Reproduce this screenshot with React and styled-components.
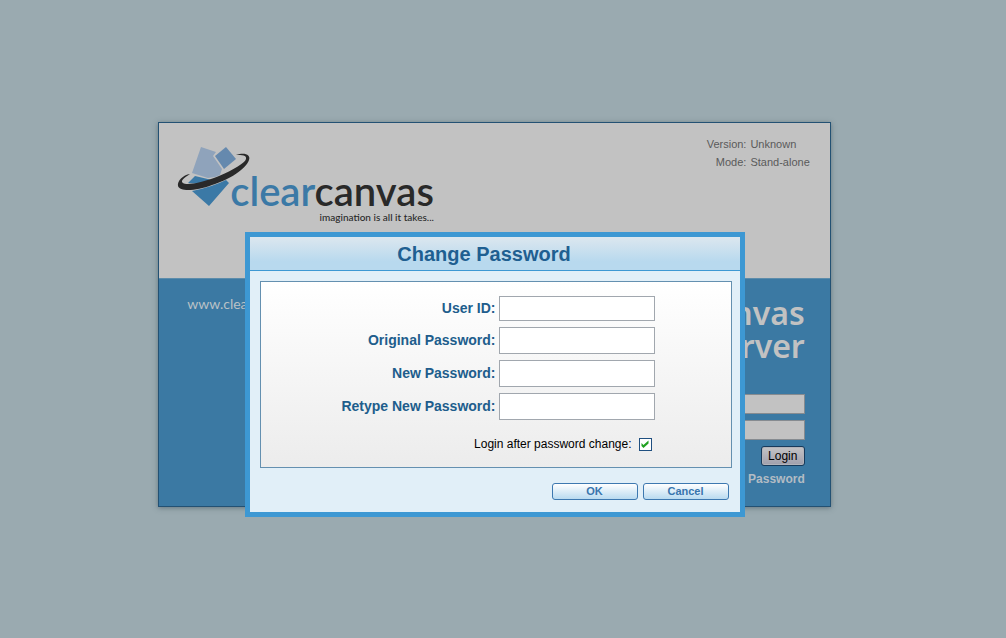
import React from 'react';
import styled, { createGlobalStyle } from 'styled-components';

const Global = createGlobalStyle`
  *, *::before, *::after { box-sizing: border-box; }
  body {
    margin: 0;
    background: #9aaab0;
    font-family: 'Liberation Sans', Arial, sans-serif;
    font-size: 12px;
  }
`;

const Page = styled.div`
  min-height: 100vh;
  padding: 0 17px 9px 0;
  display: grid;
  place-items: center;
`;

const Stage = styled.main`
  grid-area: 1 / 1;
  width: 68%;
  min-width: 600px;
  border: 1px solid #235173;
  background: #3b79a3;
  box-shadow: 0 1px 5px rgba(50, 70, 80, 0.5);
`;

const Header = styled.header`
  display: flex;
  justify-content: space-between;
  align-items: flex-start;
  min-height: 156px;
  padding: 12px 20px 0 15px;
  background: #c2c2c2;
  border-bottom: 1px solid #5c8cab;
`;

const Brand = styled.div`
  display: grid;
  grid-template-columns: 56px auto;
  padding-top: 7px;
`;

const Mark = styled.svg`
  grid-area: 1 / 1;
  width: 80px;
  height: 68px;
`;

const Wordmark = styled.div`
  grid-area: 1 / 2;
  padding-top: 30px;
  font: 600 40px/38px Lato, sans-serif;
  color: #3b79a6;
`;

const Dark = styled.span`
  color: #292929;
`;

const Tagline = styled.div`
  grid-area: 2 / 2;
  text-align: right;
  font: 500 10px/14px Lato, sans-serif;
  color: #292929;
`;

const Info = styled.dl`
  display: grid;
  grid-template-columns: auto auto;
  column-gap: 4px;
  margin: 0;
  font-size: 11px;
  line-height: 18px;
  color: #5a5a5a;
`;

const Term = styled.dt`
  text-align: right;
`;

const Value = styled.dd`
  margin: 0;
`;

const Lower = styled.div`
  display: flex;
  justify-content: space-between;
  min-height: 227px;
  padding: 17px 25px 16px 28px;
`;

const Site = styled.a`
  align-self: flex-start;
  font: 14px/16px Lato, sans-serif;
  color: #b9c1c6;
  text-decoration: none;
`;

const SignIn = styled.form`
  display: flex;
  flex-direction: column;
  align-items: flex-end;
`;

const Product = styled.h1`
  margin: 0 0 32px;
  text-align: right;
  font: 600 32px/33px 'Noto Sans', sans-serif;
  color: #c2c2c2;
`;

const LoginField = styled.input`
  width: 150px;
  height: 20px;
  margin-bottom: 6px;
  padding: 0 4px;
  border: 1px solid #868b90;
  background: #c2c2c2;
`;

const LoginButton = styled.button`
  width: 44px;
  height: 20px;
  padding: 0;
  border: 1px solid #173a5b;
  border-radius: 3px;
  background: linear-gradient(#c4c4c6, #a09fac);
  box-shadow: inset 0 0 0 1px #b3b3b9;
  font: 12px/16px 'Liberation Sans', Arial, sans-serif;
  color: #000;
`;

const PasswordLink = styled.a`
  padding-top: 5px;
  font-weight: bold;
  font-size: 12px;
  line-height: 16px;
  color: #b3bcc4;
  text-decoration: none;
`;

const Dialog = styled.section`
  position: relative;
  grid-area: 1 / 1;
  width: 500px;
  margin-top: 120px;
  border: 5px solid #3d98d3;
  background: #e1eff8;
`;

const TitleBar = styled.h2`
  margin: 0;
  padding: 1px 21px 0 0;
  border-bottom: 1px solid #3d98d3;
  background: linear-gradient(#dce7ef, #b8d9ee 75%);
  text-align: center;
  font-size: 20px;
  line-height: 32px;
  color: #1f5f91;
`;

const DialogForm = styled.form`
  padding: 10px 8px 12px 10px;
`;

const Fields = styled.div`
  display: grid;
  grid-template-columns: 235px 156px;
  gap: 6px 3px;
  align-items: center;
  align-content: start;
  min-height: 187px;
  padding-top: 14px;
  border: 1px solid #6490b0;
  background: linear-gradient(#fff, #ececec);
`;

const FieldLabel = styled.label`
  padding-bottom: 2px;
  text-align: right;
  font-weight: bold;
  font-size: 14px;
  line-height: 16px;
  color: #205d8c;
`;

const Field = styled.input`
  width: 100%;
  height: ${(p) => (p.type === 'password' ? 27 : 25)}px;
  padding: 2px 5px;
  border: 1px solid #a1a7ae;
  background: #fff;
`;

const CheckRow = styled.label`
  grid-column: 1 / -1;
  display: flex;
  justify-content: flex-end;
  align-items: center;
  gap: 7px;
  padding: 10px 3px 0 0;
  font-size: 12px;
  line-height: 17px;
  color: #000;
`;

const Check = styled.input`
  appearance: none;
  width: 13px;
  height: 13px;
  margin: 0;
  border: 1px solid #1f4f80;
  background: #fff;
  display: grid;
  place-items: center;

  &:checked::before {
    content: '';
    width: 9px;
    height: 9px;
    background: #21a121;
    clip-path: polygon(11% 33%, 33% 55%, 89% 5%, 89% 38%, 33% 90%, 11% 66%);
  }
`;

const Actions = styled.div`
  display: flex;
  justify-content: flex-end;
  gap: 5px;
  padding: 15px 3px 0 0;
`;

const ActionButton = styled.button`
  width: 86px;
  height: 17px;
  padding: 0;
  border: 1px solid #3d78b0;
  border-radius: 3px;
  background: linear-gradient(#fff, #b9daf0);
  font: bold 11px/15px 'Liberation Sans', Arial, sans-serif;
  color: #3874ad;
`;

function LogoMark() {
  return (
    <Mark viewBox="0 0 80 68" aria-hidden="true">
      <path d="M27 5 L42 10 L39 14 L48 27 L46 33 L41 35 L34 36 L18 31 Z" fill="#8fa3bb" />
      <path d="M52 5 L62 17 L50 27 L41 14 Z" fill="#6589ae" />
      <path d="M21 34 L38 38 L26 42 L14 41 Z M18 49 Q38 45 52 38 L55 41 L35 64 Z" fill="#3b79a6" />
      <path
        fill="#292929"
        d="M62 13 C71 10 77 13 75 18 C72 27 55 38 38 43 C22 49 6 50 4 44 C3 39 9 33 16 32 C10 36 6 39 9 41 C13 44 30 40 45 34 C59 28 71 21 72 17 C73 13 68 13 62 13 Z"
      />
    </Mark>
  );
}

const FIELDS = [
  { id: 'user', label: 'User ID:', type: 'text' },
  { id: 'original', label: 'Original Password:', type: 'password' },
  { id: 'new', label: 'New Password:', type: 'password' },
  { id: 'retype', label: 'Retype New Password:', type: 'password' },
];

export default function App() {
  const stop = (e) => e.preventDefault();
  return (
    <>
      <Global />
      <Page>
        <Stage>
          <Header>
            <Brand>
              <LogoMark />
              <Wordmark>clear<Dark>canvas</Dark></Wordmark>
              <Tagline>imagination is all it takes...</Tagline>
            </Brand>
            <Info>
              <Term>Version:</Term>
              <Value>Unknown</Value>
              <Term>Mode:</Term>
              <Value>Stand-alone</Value>
            </Info>
          </Header>
          <Lower>
            <Site href="#">www.clearcanvas.ca</Site>
            <SignIn onSubmit={stop}>
              <Product>ClearCanvas<br />ImageServer</Product>
              <LoginField type="text" aria-label="User ID" />
              <LoginField type="password" aria-label="Password" />
              <LoginButton type="submit">Login</LoginButton>
              <PasswordLink href="#">Change Password</PasswordLink>
            </SignIn>
          </Lower>
        </Stage>
        <Dialog role="dialog" aria-labelledby="dialog-title">
          <TitleBar id="dialog-title">Change Password</TitleBar>
          <DialogForm onSubmit={stop}>
            <Fields>
              {FIELDS.map((f) => (
                <React.Fragment key={f.id}>
                  <FieldLabel htmlFor={f.id}>{f.label}</FieldLabel>
                  <Field id={f.id} type={f.type} />
                </React.Fragment>
              ))}
              <CheckRow>
                Login after password change:
                <Check type="checkbox" defaultChecked />
              </CheckRow>
            </Fields>
            <Actions>
              <ActionButton type="submit">OK</ActionButton>
              <ActionButton type="button">Cancel</ActionButton>
            </Actions>
          </DialogForm>
        </Dialog>
      </Page>
    </>
  );
}
